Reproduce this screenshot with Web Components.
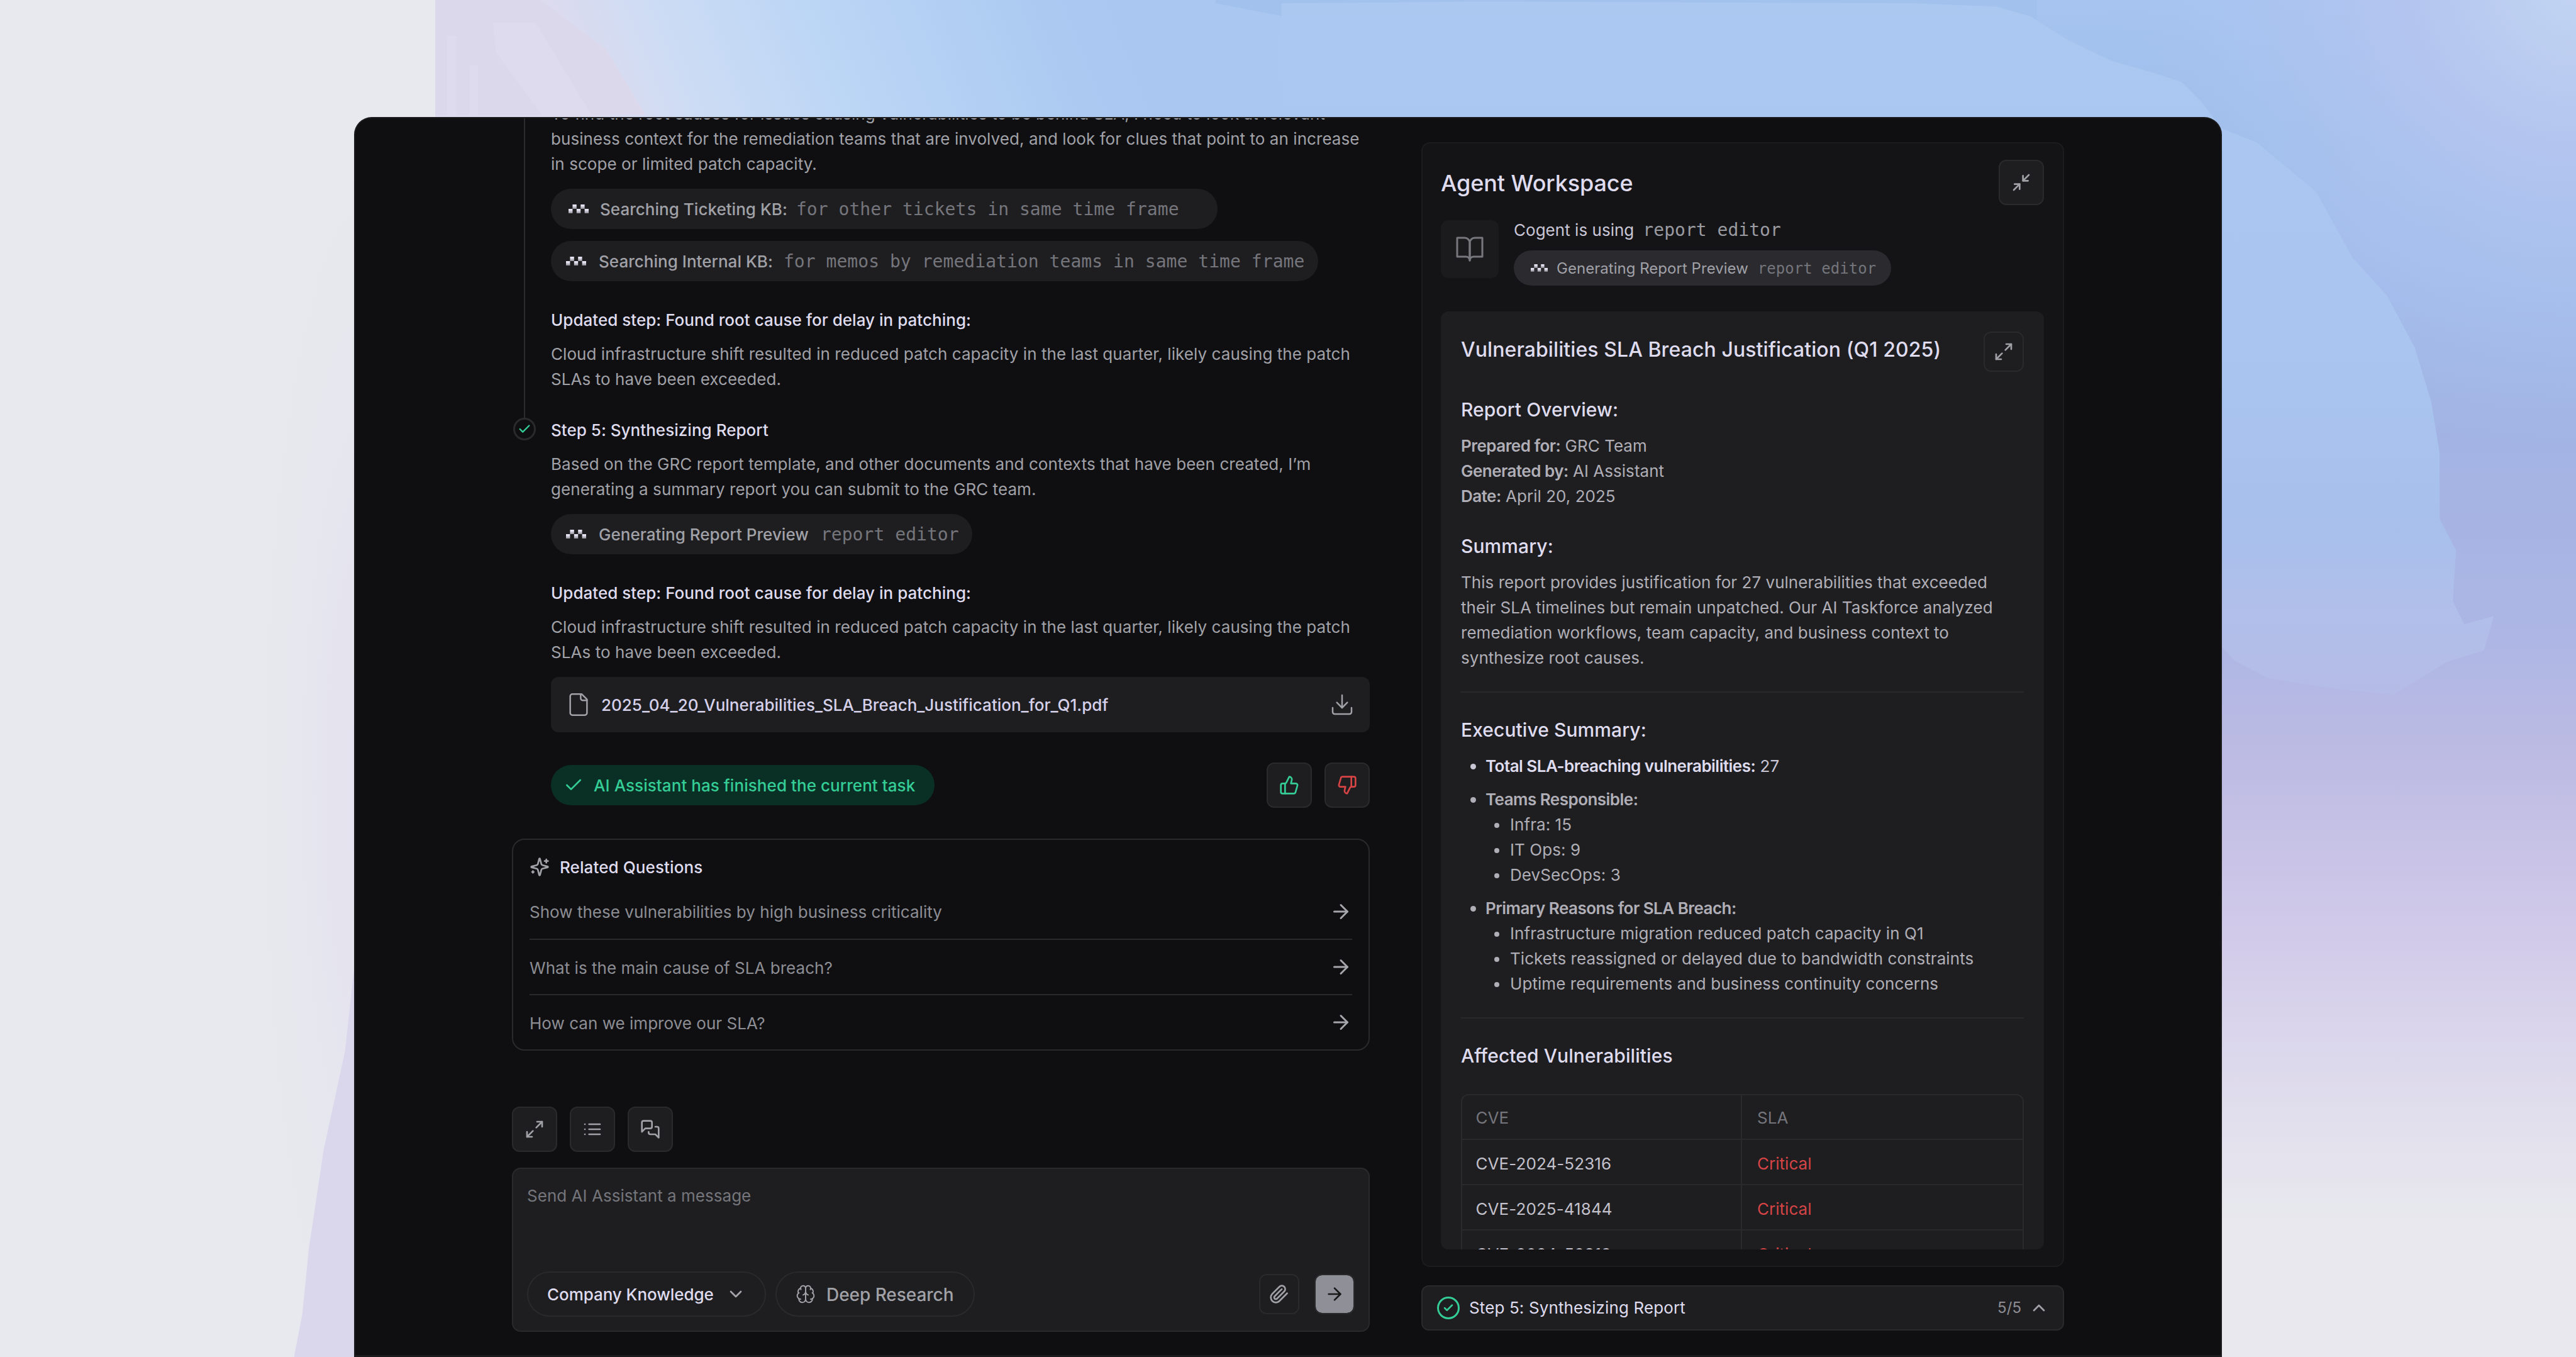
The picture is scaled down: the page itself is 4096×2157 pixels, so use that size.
<!DOCTYPE html>
<html lang="en">
<head>
<meta charset="utf-8">
<title>Agent Workspace</title>
<style>
  html, body {
    margin: 0;
    height: 100%;
    overflow: hidden;
    background: #e8e9ee;
  }
  body {
    --pane: #0f0f11;
    --panel: #141416;
    --card: #1e1e20;
    --line: #2a2a2d;
    --bright: #dfdcef;
    --text: #a1a1a8;
    --muted: #75757c;
    --green: #34cd96;
    --red: #d64446;
    --mono: "DejaVu Sans Mono", "Liberation Mono", monospace;
    font: 400 26px/40px Inter, "Liberation Sans", sans-serif;
    letter-spacing: 0.03px;
    color: var(--text);
  }
</style>
</head>
<body>

<app-desktop>
  <app-window>
    <chat-thread slot="main">
      <agent-step>
        <p>To find the root causes for issues causing vulnerabilities to be behind SLA, I need to look at relevant<br>business context for the remediation teams that are involved, and look for clues that point to an increase<br>in scope or limited patch capacity.</p>
        <tool-pill style="--w: 1060px; --pad: 28px; --gap: 18px; --detail-gap: 14px" detail="for other tickets in same time frame">Searching Ticketing KB:</tool-pill>
        <tool-pill style="--w: 1220px" detail="for memos by remediation teams in same time frame">Searching Internal KB:</tool-pill>
        <h4>Updated step: Found root cause for delay in patching:</h4>
        <p>Cloud infrastructure shift resulted in reduced patch capacity in the last quarter, likely causing the patch<br>SLAs to have been exceeded.</p>
      </agent-step>
      <agent-step done>
        <h3>Step 5: Synthesizing Report</h3>
        <p>Based on the GRC report template, and other documents and contexts that have been created, I’m<br>generating a summary report you can submit to the GRC team.</p>
        <tool-pill style="--w: 670px; --detail-gap: 19px" detail="report editor">Generating Report Preview</tool-pill>
        <h4>Updated step: Found root cause for delay in patching:</h4>
        <p>Cloud infrastructure shift resulted in reduced patch capacity in the last quarter, likely causing the patch<br>SLAs to have been exceeded.</p>
        <file-card>2025_04_20_Vulnerabilities_SLA_Breach_Justification_for_Q1.pdf</file-card>
        <task-status>AI Assistant has finished the current task</task-status>
      </agent-step>
      <related-questions heading="Related Questions">
        <related-question>Show these vulnerabilities by high business criticality</related-question>
        <related-question>What is the main cause of SLA breach?</related-question>
        <related-question last>How can we improve our SLA?</related-question>
      </related-questions>
    </chat-thread>
    <message-composer slot="composer"></message-composer>
    <agent-workspace slot="side">
      <report-card></report-card>
    </agent-workspace>
    <step-bar slot="footer" count="5/5">Step 5: Synthesizing Report</step-bar>
  </app-window>
</app-desktop>

<script>
// 24x24 stroked icons
const ICONS = {
  check: '<path d="M20 6 9 17l-5-5"/>',
  file: '<path d="M15 2H6a2 2 0 0 0-2 2v16a2 2 0 0 0 2 2h12a2 2 0 0 0 2-2V7Z"/><path d="M14 2v4a2 2 0 0 0 2 2h4"/>',
  download: '<path d="M21 15v4a2 2 0 0 1-2 2H5a2 2 0 0 1-2-2v-4"/><path d="m7 10 5 5 5-5"/><path d="M12 15V3"/>',
  up: '<path d="M7 10v12"/><path d="M15 5.88 14 10h5.83a2 2 0 0 1 1.92 2.56l-2.33 8A2 2 0 0 1 17.5 22H4a2 2 0 0 1-2-2v-8a2 2 0 0 1 2-2h2.76a2 2 0 0 0 1.79-1.11L12 2a3.13 3.13 0 0 1 3 3.88Z"/>',
  down: '<path d="M17 14V2"/><path d="M9 18.12 10 14H4.17a2 2 0 0 1-1.92-2.56l2.33-8A2 2 0 0 1 6.5 2H20a2 2 0 0 1 2 2v8a2 2 0 0 1-2 2h-2.76a2 2 0 0 0-1.79 1.11L12 22a3.13 3.13 0 0 1-3-3.88Z"/>',
  sparkles: '<path d="M9.937 15.5A2 2 0 0 0 8.5 14.063l-6.135-1.582a.5.5 0 0 1 0-.962L8.5 9.936A2 2 0 0 0 9.937 8.5l1.582-6.135a.5.5 0 0 1 .963 0L14.063 8.5A2 2 0 0 0 15.5 9.937l6.135 1.581a.5.5 0 0 1 0 .964L15.5 14.063a2 2 0 0 0-1.437 1.437l-1.582 6.135a.5.5 0 0 1-.963 0z"/><path d="M20 3v4"/><path d="M22 5h-4"/><path d="M4 17v2"/><path d="M5 18H3"/>',
  arrow: '<path d="M5 12h14"/><path d="m12 5 7 7-7 7"/>',
  expand: '<path d="M15 3h6v6"/><path d="M9 21H3v-6"/><path d="m21 3-7 7"/><path d="m3 21 7-7"/>',
  collapse: '<path d="M4 14h6v6"/><path d="M20 10h-6V4"/><path d="m14 10 7-7"/><path d="m3 21 7-7"/>',
  list: '<path d="M8 6h13"/><path d="M8 12h13"/><path d="M8 18h13"/><path d="M3 6h.01"/><path d="M3 12h.01"/><path d="M3 18h.01"/>',
  messages: '<path d="M14 9a2 2 0 0 1-2 2H6l-4 4V4a2 2 0 0 1 2-2h8a2 2 0 0 1 2 2z"/><path d="M18 9h2a2 2 0 0 1 2 2v11l-4-4h-6a2 2 0 0 1-2-2v-1"/>',
  chevronDown: '<path d="m6 9 6 6 6-6"/>',
  chevronUp: '<path d="m18 15-6-6-6 6"/>',
  brain: '<path d="M12 5a3 3 0 1 0-5.997.125 4 4 0 0 0-2.526 5.77 4 4 0 0 0 .556 6.588A4 4 0 1 0 12 18Z"/><path d="M12 5a3 3 0 1 1 5.997.125 4 4 0 0 1 2.526 5.77 4 4 0 0 1-.556 6.588A4 4 0 1 1 12 18Z"/><path d="M15 13a4.5 4.5 0 0 1-3-4 4.5 4.5 0 0 1-3 4"/><path d="M17.599 6.5a3 3 0 0 0 .399-1.375"/><path d="M6.003 5.125A3 3 0 0 0 6.401 6.5"/><path d="M3.477 10.896a4 4 0 0 1 .585-.396"/><path d="M19.938 10.5a4 4 0 0 1 .585.396"/><path d="M6 18a4 4 0 0 1-1.967-.516"/><path d="M19.967 17.484A4 4 0 0 1 18 18"/>',
  clip: '<path d="m21.44 11.05-9.19 9.19a6 6 0 0 1-8.49-8.49l8.57-8.57A4 4 0 1 1 18 8.84l-8.59 8.57a2 2 0 0 1-2.83-2.83l8.49-8.48"/>',
  book: '<path d="M2 3h6a4 4 0 0 1 4 4v14a3 3 0 0 0-3-3H2z"/><path d="M22 3h-6a4 4 0 0 0-4 4v14a3 3 0 0 1 3-3h7z"/>'
};

class UiIcon extends HTMLElement {
  constructor() {
    super();
    this.attachShadow({ mode: 'open' });
  }

  connectedCallback() {
    const size = this.getAttribute('size') || 32;
    this.shadowRoot.innerHTML = `
      <style>
        :host { display: block; flex: none; width: ${size}px; height: ${size}px; }
        svg { display: block; }
      </style>
      <svg width="${size}" height="${size}" viewBox="0 0 24 24" fill="none" stroke="currentColor"
        stroke-width="${this.getAttribute('stroke') || 2}" stroke-linecap="round" stroke-linejoin="round">
        ${ICONS[this.getAttribute('name')]}
      </svg>
    `;
  }
}

class IconButton extends HTMLElement {
  constructor() {
    super();
    this.attachShadow({ mode: 'open' });
  }

  connectedCallback() {
    this.shadowRoot.innerHTML = `
      <style>
        :host {
          display: flex;
          flex: none;
          align-items: center;
          justify-content: center;
          box-sizing: border-box;
          width: var(--size, 72px);
          height: var(--size, 72px);
          border: 2px solid var(--line);
          border-radius: 12px;
          background: var(--card);
        }
      </style>
      <ui-icon name="${this.getAttribute('icon')}"></ui-icon>
    `;
  }
}

/* the little checkerboard logo in front of each tool call */
class CogentMark extends HTMLElement {
  constructor() {
    super();
    this.attachShadow({ mode: 'open' });
    this.shadowRoot.innerHTML = `
      <style>
        :host { display: block; flex: none; width: var(--mark, 32px); }
        svg { display: block; width: 100%; }
      </style>
      <svg viewBox="0 0 32 14">
        <defs>
          <linearGradient id="g" x1="0" y1="0" x2="0" y2="1">
            <stop offset=".3" stop-color="#e6e3f2"/>
            <stop offset="1" stop-color="#8e8e95"/>
          </linearGradient>
        </defs>
        <g fill="url(#g)">
          <rect x="6.4" width="6.4" height="7"/>
          <rect x="19.2" width="6.4" height="7"/>
          <rect y="7" width="6.4" height="7"/>
          <rect x="12.8" y="7" width="6.4" height="7"/>
          <rect x="25.6" y="7" width="6.4" height="7"/>
        </g>
      </svg>
    `;
  }
}

class ToolPill extends HTMLElement {
  constructor() {
    super();
    this.attachShadow({ mode: 'open' });
  }

  connectedCallback() {
    this.shadowRoot.innerHTML = `
      <style>
        :host {
          display: flex;
          align-items: center;
          box-sizing: border-box;
          width: var(--w);
          height: var(--h, 64px);
          padding-left: var(--pad, 24px);
          border-radius: 32px;
          background: var(--pill, var(--card));
          white-space: nowrap;
        }
        .label { margin-left: var(--gap, 20px); font-weight: var(--weight, 500); font-size: var(--fs, 26px); }
        .detail {
          margin-left: var(--detail-gap, 17px);
          font: var(--mono-size, 28px)/1 var(--mono);
          letter-spacing: 0.05px;
          color: var(--muted);
        }
        .row { display: flex; align-items: baseline; padding-top: 2px; }
      </style>
      <cogent-mark></cogent-mark>
      <div class="row">
        <span class="label"><slot></slot></span>
        <span class="detail">${this.getAttribute('detail')}</span>
      </div>
    `;
  }
}

class AgentStep extends HTMLElement {
  constructor() {
    super();
    this.attachShadow({ mode: 'open' });
  }

  connectedCallback() {
    const done = this.hasAttribute('done');
    this.shadowRoot.innerHTML = `
      <style>
        :host { display: grid; grid-template-columns: 40px 1fr; column-gap: 22px; }
        .rail { display: flex; flex-direction: column; align-items: center; }
        .line { flex: 1; width: 2px; background: #2b2b2e; }
        .dot {
          display: flex;
          align-items: center;
          justify-content: center;
          box-sizing: border-box;
          width: 36px;
          height: 36px;
          border: 3px solid var(--line);
          border-radius: 50%;
          color: var(--green);
        }
        .body { padding-bottom: ${done ? 0 : 41}px; }
        ::slotted(p), ::slotted(h3), ::slotted(h4) {
          margin: 0;
          font-size: 26px;
          line-height: 40px;
          white-space: nowrap;
        }
        ::slotted(p) { letter-spacing: 0.06px; }
        ::slotted(h3), ::slotted(h4) { margin-bottom: 14px; font-weight: 500; color: var(--bright); }
        ::slotted(h4) { margin-top: 42px; }
        ::slotted(tool-pill) { margin-top: 19px; }
        ::slotted(tool-pill + tool-pill) { margin-top: 20px; }
        ::slotted(file-card) { margin-top: 19px; }
        ::slotted(task-status) { margin-top: 48px; }
      </style>
      <div class="rail">${done
        ? '<div class="dot"><ui-icon name="check" size="22" stroke="2.6"></ui-icon></div>'
        : '<div class="line"></div>'}</div>
      <div class="body"><slot></slot></div>
    `;
  }
}

class FileCard extends HTMLElement {
  constructor() {
    super();
    this.attachShadow({ mode: 'open' });
    this.shadowRoot.innerHTML = `
      <style>
        :host {
          display: flex;
          align-items: center;
          gap: 16px;
          height: 88px;
          padding: 0 24px;
          border-radius: 12px;
          background: var(--card);
        }
        .name { flex: 1; padding-top: 2px; font-weight: 500; letter-spacing: 0; color: #d6d1ea; }
      </style>
      <ui-icon name="file" size="40" stroke="1.5"></ui-icon>
      <span class="name"><slot></slot></span>
      <ui-icon name="download" size="40" stroke="1.5"></ui-icon>
    `;
  }
}

class TaskStatus extends HTMLElement {
  constructor() {
    super();
    this.attachShadow({ mode: 'open' });
    this.shadowRoot.innerHTML = `
      <style>
        :host { display: flex; align-items: center; gap: 20px; }
        .done {
          display: flex;
          align-items: center;
          gap: 16px;
          height: 64px;
          padding: 0 31px 0 20px;
          margin-right: auto;
          border-radius: 32px;
          background: #0a3026;
          color: var(--green);
          font-weight: 500;
          letter-spacing: 0.06px;
        }
        .done span { padding-top: 2px; }
        .up { color: var(--green); }
        .down { color: var(--red); }
      </style>
      <div class="done"><ui-icon name="check"></ui-icon><span><slot></slot></span></div>
      <icon-button class="up" icon="up"></icon-button>
      <icon-button class="down" icon="down"></icon-button>
    `;
  }
}

class RelatedQuestions extends HTMLElement {
  constructor() {
    super();
    this.attachShadow({ mode: 'open' });
  }

  connectedCallback() {
    this.shadowRoot.innerHTML = `
      <style>
        :host {
          display: block;
          box-sizing: border-box;
          height: 337px;
          padding: 22.5px 26px 0;
          border: 2px solid var(--line);
          border-radius: 20px;
        }
        .head { display: flex; align-items: center; gap: 16px; height: 40px; margin-bottom: 8px; }
        .title { padding-top: 2px; font-weight: 500; letter-spacing: 0.1px; color: var(--bright); }
      </style>
      <div class="head">
        <ui-icon name="sparkles"></ui-icon>
        <span class="title">${this.getAttribute('heading')}</span>
      </div>
      <slot></slot>
    `;
  }
}

class RelatedQuestion extends HTMLElement {
  constructor() {
    super();
    this.attachShadow({ mode: 'open' });
    this.shadowRoot.innerHTML = `
      <style>
        :host {
          display: flex;
          align-items: center;
          justify-content: space-between;
          height: 86.4px;
          border-bottom: 2px solid var(--line);
          color: #8d8d94;
        }
        :host([last]) { border-bottom: 0; }
        span { padding-top: 3px; }
        ui-icon { color: #a5a5ac; }
      </style>
      <span><slot></slot></span>
      <ui-icon name="arrow" size="36"></ui-icon>
    `;
  }
}

class ChatThread extends HTMLElement {
  constructor() {
    super();
    this.attachShadow({ mode: 'open' });
    this.shadowRoot.innerHTML = `
      <style>
        :host { display: block; min-height: 0; overflow: hidden; }
        /* scrolled part of the way into the previous step */
        .scrolled { margin-top: -27px; }
        ::slotted(related-questions) { margin-top: 49px; }
      </style>
      <div class="scrolled"><slot></slot></div>
    `;
  }
}

class MessageComposer extends HTMLElement {
  constructor() {
    super();
    this.attachShadow({ mode: 'open' });
    this.shadowRoot.innerHTML = `
      <style>
        :host { display: flex; flex-direction: column; gap: 25px; }
        .tools { display: flex; gap: 20px; }
        .box {
          display: flex;
          flex-direction: column;
          justify-content: space-between;
          box-sizing: border-box;
          height: 261px;
          padding: 23px 22px 22px;
          border: 2px solid var(--line);
          border-radius: 14px;
          background: var(--card);
        }
        .placeholder { color: var(--muted); }
        .actions { display: flex; align-items: center; }
        .chip {
          display: flex;
          align-items: center;
          box-sizing: border-box;
          height: 72px;
          padding: 0 30px;
          border: 2px solid var(--line);
          border-radius: 36px;
          margin-right: 15px;
        }
        .chip span { padding-top: 1px; }
        .knowledge { width: 380px; justify-content: space-between; font-weight: 500; letter-spacing: -0.06px; color: var(--bright); }
        .knowledge ui-icon { color: #a5a5ac; }
        .research { width: 317px; gap: 17px; font-weight: 500; font-size: 28px; letter-spacing: -0.05px; }
        .clip { --size: 64px; margin: 0 24px 0 auto; }
        .send {
          display: flex;
          align-items: center;
          justify-content: center;
          width: 60px;
          height: 60px;
          border: 2px solid #29292c;
          border-radius: 12px;
          background: #8f8f97;
          background-clip: padding-box;
          color: #18181a;
        }
      </style>
      <div class="tools">
        <icon-button icon="expand"></icon-button>
        <icon-button icon="list"></icon-button>
        <icon-button icon="messages"></icon-button>
      </div>
      <div class="box">
        <div class="placeholder">Send AI Assistant a message</div>
        <div class="actions">
          <div class="chip knowledge"><span>Company Knowledge</span><ui-icon name="chevronDown"></ui-icon></div>
          <div class="chip research"><ui-icon name="brain" stroke="1.5"></ui-icon><span>Deep Research</span></div>
          <icon-button class="clip" icon="clip"></icon-button>
          <div class="send"><ui-icon name="arrow"></ui-icon></div>
        </div>
      </div>
    `;
  }
}

class CveTable extends HTMLElement {
  constructor() {
    super();
    this.attachShadow({ mode: 'open' });
  }

  connectedCallback() {
    const rows = ['CVE-2024-52316', 'CVE-2025-41844', 'CVE-2024-52319'];
    this.shadowRoot.innerHTML = `
      <style>
        :host {
          display: block;
          border: 2px solid var(--line);
          border-radius: 12px;
        }
        .row { display: grid; grid-template-columns: 445px 1fr; height: 70px; border-bottom: 2px solid var(--line); }
        .row > span { padding: 17.5px 24px 0; }
        .row > span:first-child { padding-left: 21.5px; border-right: 2px solid var(--line); }
        .head { height: 69px; color: var(--muted); }
        .row.head > span { padding-top: 15.5px; }
        .id { letter-spacing: 0.08px; color: #c3c1cb; }
        .sla { color: var(--red); }
      </style>
      <div class="row head"><span>CVE</span><span>SLA</span></div>
      ${rows.map(id => `<div class="row"><span class="id">${id}</span><span class="sla">Critical</span></div>`).join('')}
    `;
  }
}

class ReportCard extends HTMLElement {
  constructor() {
    super();
    this.attachShadow({ mode: 'open' });
    this.shadowRoot.innerHTML = `
      <style>
        :host {
          display: block;
          box-sizing: border-box;
          height: 1491px;
          padding: 32px;
          overflow: hidden;
          border-radius: 12px;
          background: var(--card);
          color: #b0aeb6;
          white-space: nowrap;
        }
        .top { display: flex; justify-content: space-between; margin-bottom: 39.5px; }
        .top icon-button { --size: 64px; color: var(--text); }
        h2 { margin: 0; font-weight: 500; font-size: 32px; line-height: 57px; letter-spacing: 0.08px; color: var(--bright); }
        h3 { margin: 0 0 18px; font-weight: 500; font-size: 30px; line-height: 40px; letter-spacing: 0.08px; color: var(--bright); }
        p { margin: 0 0 39px; }
        b { font-weight: 600; letter-spacing: -0.53px; }
        hr { height: 2px; margin: 0 0 39px; border: 0; background: #29292c; }
        .summary { margin-bottom: 33.5px; }
        ul { margin: 0; padding: 0; list-style: none; }
        li { padding-left: 39px; margin-bottom: 13px; }
        li::before {
          content: "";
          display: inline-block;
          width: 9px;
          height: 9px;
          margin: 0 15px 4px -24px;
          border-radius: 50%;
          background: currentColor;
        }
        li li { margin: 0; letter-spacing: 0.06px; }
        li li::before { width: 8px; height: 8px; margin: 0 17px 4px -25px; }
        .total b { color: var(--bright); }
        .total { color: #c9c6d6; }
        .last { margin-bottom: 33px; }
        .affected { margin-bottom: 41px; }
      </style>
      <div class="top">
        <h2>Vulnerabilities SLA Breach Justification (Q1 2025)</h2>
        <icon-button icon="expand"></icon-button>
      </div>
      <h3>Report Overview:</h3>
      <p><b>Prepared for:</b> GRC Team<br><b>Generated by:</b> AI Assistant<br><b>Date:</b> April 20, 2025</p>
      <h3>Summary:</h3>
      <p class="summary">This report provides justification for 27 vulnerabilities that exceeded<br>their SLA timelines but remain unpatched. Our AI Taskforce analyzed<br>remediation workflows, team capacity, and business context to<br>synthesize root causes.</p>
      <hr>
      <h3>Executive Summary:</h3>
      <ul>
        <li class="total"><b>Total SLA-breaching vulnerabilities:</b> 27</li>
        <li><b>Teams Responsible:</b>
          <ul>
            <li>Infra: 15</li>
            <li>IT Ops: 9</li>
            <li>DevSecOps: 3</li>
          </ul>
        </li>
        <li class="last"><b>Primary Reasons for SLA Breach:</b>
          <ul>
            <li>Infrastructure migration reduced patch capacity in Q1</li>
            <li>Tickets reassigned or delayed due to bandwidth constraints</li>
            <li>Uptime requirements and business continuity concerns</li>
          </ul>
        </li>
      </ul>
      <hr>
      <h3 class="affected">Affected Vulnerabilities</h3>
      <cve-table></cve-table>
    `;
  }
}

class AgentWorkspace extends HTMLElement {
  constructor() {
    super();
    this.attachShadow({ mode: 'open' });
    this.shadowRoot.innerHTML = `
      <style>
        :host {
          display: block;
          box-sizing: border-box;
          padding: 26px 30px 26px 29px;
          border: 2px solid #1c1c1f;
          border-radius: 14px;
          background: var(--panel);
        }
        .head { display: flex; align-items: center; justify-content: space-between; margin-bottom: 24px; }
        h1 { margin: 2px 0 0; font-weight: 500; font-size: 36px; letter-spacing: -0.12px; color: var(--bright); }
        .tool { display: flex; gap: 24px; margin-bottom: 41px; }
        .tile {
          display: flex;
          align-items: center;
          justify-content: center;
          width: 92px;
          height: 92px;
          border-radius: 12px;
          background: #1b1b1d;
          color: #77777e;
        }
        .using { display: flex; align-items: baseline; gap: 14px; height: 32px; line-height: 32px; margin-bottom: 16px; color: #c9c6d6; }
        .using code { font: 28px/1 var(--mono); color: #9a9aa1; }
        tool-pill {
          --w: 600px;
          --h: 56px;
          --pad: 27px;
          --gap: 14px;
          --mark: 27px;
          --fs: 24px;
          --weight: 400;
          --mono-size: 24px;
          --detail-gap: 15px;
          --pill: #2a2a2f;
        }
      </style>
      <div class="head"><h1>Agent Workspace</h1><icon-button icon="collapse"></icon-button></div>
      <div class="tool">
        <div class="tile"><ui-icon name="book" size="48" stroke="1.5"></ui-icon></div>
        <div>
          <div class="using"><span>Cogent is using</span><code>report editor</code></div>
          <tool-pill detail="report editor">Generating Report Preview</tool-pill>
        </div>
      </div>
      <slot></slot>
    `;
  }
}

class StepBar extends HTMLElement {
  constructor() {
    super();
    this.attachShadow({ mode: 'open' });
  }

  connectedCallback() {
    this.shadowRoot.innerHTML = `
      <style>
        :host {
          display: flex;
          align-items: center;
          box-sizing: border-box;
          height: 72px;
          padding: 0 22px 0 23px;
          border: 2px solid var(--line);
          border-radius: 12px;
          background: var(--card);
        }
        .ring {
          display: flex;
          align-items: center;
          justify-content: center;
          box-sizing: border-box;
          width: 36px;
          height: 36px;
          border: 3px solid var(--green);
          border-radius: 50%;
          color: var(--green);
        }
        .label { flex: 1; margin-left: 15px; letter-spacing: 0.12px; color: var(--bright); }
        .count { margin-right: 12px; font-size: 24px; color: #8d8d94; }
      </style>
      <div class="ring"><ui-icon name="check" size="18" stroke="3.4"></ui-icon></div>
      <span class="label"><slot></slot></span>
      <span class="count">${this.getAttribute('count')}</span>
      <ui-icon name="chevronUp"></ui-icon>
    `;
  }
}

class AppWindow extends HTMLElement {
  constructor() {
    super();
    this.attachShadow({ mode: 'open' });
    this.shadowRoot.innerHTML = `
      <style>
        :host {
          display: grid;
          grid-template-columns: 1364px 1022px;
          column-gap: 82px;
          box-sizing: border-box;
          width: 2970px;
          height: 1971px;
          padding: 0 249px;
          overflow: hidden;
          border: 2px solid #1c1c1f;
          border-bottom-width: 3px;
          border-radius: 28px 28px 0 0;
          background: var(--pane);
        }
        .left { display: grid; grid-template-rows: 1fr auto; min-height: 0; padding-bottom: 37px; }
        .right { display: flex; flex-direction: column; gap: 29px; padding-top: 38px; }
      </style>
      <div class="left"><slot name="main"></slot><slot name="composer"></slot></div>
      <div class="right"><slot name="side"></slot><slot name="footer"></slot></div>
    `;
  }
}

class AppDesktop extends HTMLElement {
  constructor() {
    super();
    this.attachShadow({ mode: 'open' });
    this.shadowRoot.innerHTML = `
      <style>
        :host { display: grid; width: 4096px; height: 2157px; overflow: hidden; }
        svg { grid-area: 1 / 1; display: block; width: 100%; height: 2157px; }
        ::slotted(*) { grid-area: 1 / 1; margin: 186px auto 0; }
      </style>
      <svg viewBox="0 0 1568 826" preserveAspectRatio="none">
        <defs>
          <linearGradient id="sky" gradientUnits="userSpaceOnUse" x1="350" y1="60" x2="650" y2="-60">
            <stop offset="0" stop-color="#dedbee"/>
            <stop offset=".2" stop-color="#cddcf4"/>
            <stop offset=".5" stop-color="#bad5f5"/>
            <stop offset=".9" stop-color="#abc9f1"/>
            <stop offset="1" stop-color="#aac7f1"/>
          </linearGradient>
          <linearGradient id="fall" x1="0" y1="0" x2="0" y2="1">
            <stop offset="0" stop-color="#a7c4f0"/>
            <stop offset=".1" stop-color="#9fbeeb"/>
            <stop offset=".2" stop-color="#a1b9e9"/>
            <stop offset=".32" stop-color="#a2b3e3"/>
            <stop offset=".47" stop-color="#adb6e4"/>
            <stop offset=".56" stop-color="#bdbbe3"/>
            <stop offset=".68" stop-color="#d0c9e9"/>
            <stop offset=".78" stop-color="#dcd8ec"/>
            <stop offset=".84" stop-color="#e3e1ed"/>
            <stop offset=".9" stop-color="#e8e8ee"/>
          </linearGradient>
          <linearGradient id="lobe" gradientUnits="userSpaceOnUse" x1="0" y1="0" x2="0" y2="425">
            <stop offset="0" stop-color="#abc8f1"/>
            <stop offset=".5" stop-color="#a9c5f0"/>
            <stop offset=".76" stop-color="#a8bfec"/>
            <stop offset=".86" stop-color="#b0bfea"/>
            <stop offset="1" stop-color="#b5bce6"/>
          </linearGradient>
          <radialGradient id="haze" gradientUnits="userSpaceOnUse" cx="0" cy="0" r="1" gradientTransform="translate(225 480) scale(72 400)">
            <stop offset="0" stop-color="#e0dcef"/>
            <stop offset="1" stop-color="#e2dff0" stop-opacity="0"/>
          </radialGradient>
          <radialGradient id="corner" gradientUnits="userSpaceOnUse" cx="1568" cy="-10" r="290">
            <stop offset="0" stop-color="#c3d5f2"/>
            <stop offset=".35" stop-color="#b5c5ef" stop-opacity=".9"/>
            <stop offset=".7" stop-color="#abc4f0" stop-opacity=".5"/>
            <stop offset="1" stop-color="#a3bfec" stop-opacity="0"/>
          </radialGradient>
        </defs>
        <rect width="1568" height="826" fill="#e8e9ee"/>
        <rect x="150" y="80" width="75" height="746" fill="url(#haze)" opacity=".6"/>
        <rect x="265" width="800" height="90" fill="url(#sky)"/>
        <path d="M265 0h64l40 30 24 40H265Z" fill="#dcd8ec"/>
        <path d="M300 14h26l34 56h-30l-28-38ZM272 22h6v48h-6ZM286 40h5v30h-5Z" fill="#e0ddef" opacity=".7"/>
        <rect x="1040" width="528" height="826" fill="url(#fall)"/>
        <rect x="1040" width="528" height="420" fill="url(#corner)"/>
        <path d="M740 0H1240V60H1040L740 2Z" fill="#a3c1ed"/>
        <path d="M780 90V2L900 1 1165 2 1215 4 1236 10 1258 24 1285 37 1310 44 1328 50 1340 62 1352 78 1374 87 1410 117 1432 157 1453 180 1470 212 1480 245 1485 276 1485 316 1495 335 1493 366 1500 380 1518 375 1512 396 1489 403 1457 423 1420 419 1381 413 1360 402 1340 380V90Z" fill="url(#lobe)"/>
        <path d="M216 585 210 640 197 700 188 760 184 800 179 826H216Z" fill="#dad6ec"/>
      </svg>
      <slot></slot>
    `;
  }
}

window.customElements.define('ui-icon', UiIcon);
window.customElements.define('icon-button', IconButton);
window.customElements.define('cogent-mark', CogentMark);
window.customElements.define('tool-pill', ToolPill);
window.customElements.define('agent-step', AgentStep);
window.customElements.define('file-card', FileCard);
window.customElements.define('task-status', TaskStatus);
window.customElements.define('related-questions', RelatedQuestions);
window.customElements.define('related-question', RelatedQuestion);
window.customElements.define('chat-thread', ChatThread);
window.customElements.define('message-composer', MessageComposer);
window.customElements.define('cve-table', CveTable);
window.customElements.define('report-card', ReportCard);
window.customElements.define('agent-workspace', AgentWorkspace);
window.customElements.define('step-bar', StepBar);
window.customElements.define('app-window', AppWindow);
window.customElements.define('app-desktop', AppDesktop);
</script>
</body>
</html>
